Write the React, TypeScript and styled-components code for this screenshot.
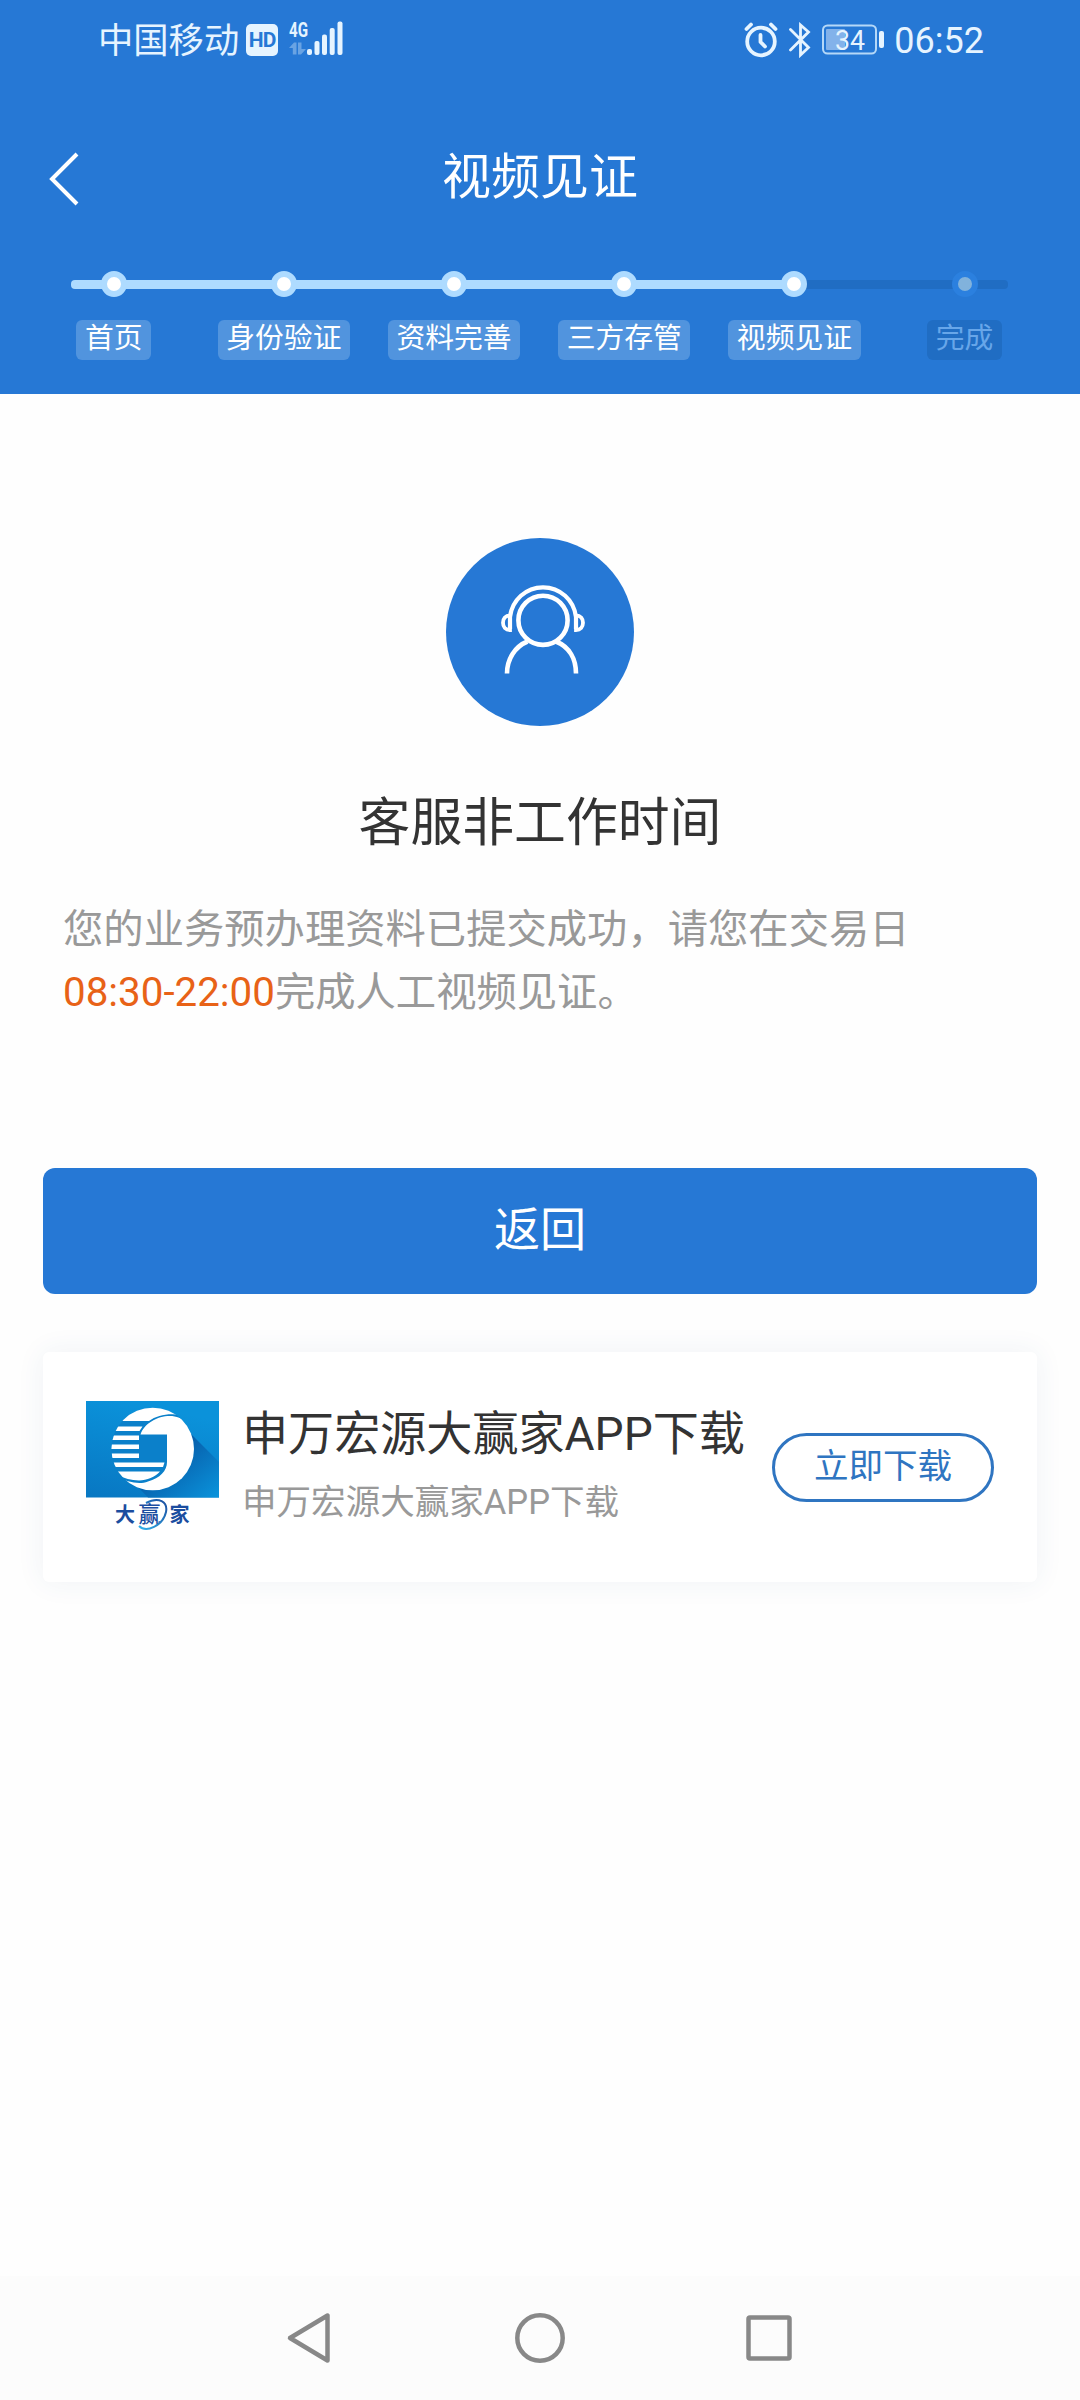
import React from 'react';
import styled, { createGlobalStyle } from 'styled-components';

const blue = '#2678d5';
const statusInk = '#e6f4ff';

const GlobalStyle = createGlobalStyle`
  * { box-sizing: border-box; }
  body {
    margin: 0;
    background: #fefefe;
    font-family: Roboto, "Noto Sans CJK SC", sans-serif;
  }
`;

const Screen = styled.div`
  width: 1080px;
  height: 2400px;
  display: flex;
  flex-direction: column;
  background: #fefefe;
`;

const Header = styled.header`
  height: 394px;
  background: ${blue};
  display: flex;
  flex-direction: column;
`;

const StatusBar = styled.div`
  height: 80px;
  padding: 0 96px 0 98px;
  display: flex;
  align-items: center;
  justify-content: space-between;
  color: ${statusInk};
`;

const StatusGroup = styled.div<{ $gap?: number }>`
  display: flex;
  align-items: center;
  gap: ${p => p.$gap ?? 0}px;
`;

const Carrier = styled.span`
  padding-top: 2px;
  font-size: 35.3px;
  line-height: 50px;
  white-space: nowrap;
  margin-right: 7px;
`;

const HdBadge = styled.span`
  width: 32px;
  height: 32px;
  border-radius: 5px;
  background: ${statusInk};
  color: ${blue};
  font: 700 21px/33px Roboto, sans-serif;
  letter-spacing: -0.8px;
  text-align: center;
  margin-right: 11px;
`;

const Clock = styled.span`
  padding-top: 1px;
  font: 400 36px/44px Roboto, sans-serif;
`;

const TitleBar = styled.div`
  height: 191px;
  display: grid;
  grid-template-columns: 120px 1fr 120px;
  align-items: center;
`;

const BackButton = styled.button`
  padding: 7px 0 0 48px;
  border: 0;
  background: none;
  display: flex;
`;

const PageTitle = styled.h1`
  margin: 0;
  padding-top: 4px;
  font-size: 48.96px;
  font-weight: 400;
  line-height: 70px;
  text-align: center;
  color: #fff;
`;

const Steps = styled.ol`
  list-style: none;
  margin: 0;
  padding: 0 28.6px;
  display: grid;
  grid-template-columns: repeat(6, 170.2px);
`;

type StepProps = { $done: boolean };

const Step = styled.li`
  display: flex;
  flex-direction: column;
  align-items: center;
`;

const Track = styled.div<{ $left: string; $right: string; $edge?: 'start' | 'end' }>`
  width: 100%;
  height: 26px;
  display: grid;
  grid-template-columns: 1fr 26px 1fr;
  align-items: center;

  &::before, &::after {
    content: "";
    height: 9px;
    margin-right: -2px;
    background: ${p => p.$left};
    grid-row: 1;
    grid-column: 1;
  }
  &::before {
    ${p => p.$edge === 'start' && 'margin-left: 42px; border-radius: 4px 0 0 4px;'}
  }
  &::after {
    grid-column: 3;
    margin-left: -2px;
    margin-right: 0;
    background: ${p => p.$right};
    ${p => p.$edge === 'end' && 'margin-right: 42px; border-radius: 0 4px 4px 0;'}
  }
`;

const Dot = styled.span<StepProps>`
  grid-row: 1;
  grid-column: 2;
  z-index: 1;
  width: 26px;
  height: 26px;
  border-radius: 50%;
  border: 6px solid ${p => (p.$done ? '#aedbff' : '#2b80df')};
  background: ${p => (p.$done ? '#fff' : '#81b2dc')};
`;

const StepLabel = styled.span<StepProps>`
  margin-top: 23px;
  height: 40px;
  padding: 0 8.6px;
  border-radius: 6px;
  font-size: 28.8px;
  line-height: 37px;
  white-space: nowrap;
  color: ${p => (p.$done ? '#fff' : '#67a6e9')};
  background: ${p => (p.$done ? '#5194de' : '#206dc3')};
`;

const Main = styled.main`
  flex: 1;
  padding: 143.500px 43px 0;
  display: flex;
  flex-direction: column;
`;

const Avatar = styled.div`
  align-self: center;
  width: 188px;
  height: 188px;
  border-radius: 50%;
  background: ${blue};
`;

const Heading = styled.h2`
  margin: 60.500px 0 0;
  font-size: 51.84px;
  font-weight: 400;
  line-height: 76px;
  text-align: center;
  color: #333;
`;

const Message = styled.p`
  margin: 36px 0 0;
  padding: 0 20px;
  font-size: 40.32px;
  line-height: 63px;
  color: #999;
`;

const Hours = styled.span`
  color: #e86217;
`;

const PrimaryButton = styled.button`
  margin-top: 144px;
  height: 126px;
  padding: 0 0 11px;
  border: 0;
  border-radius: 12px;
  background: ${blue};
  color: #fff;
  font-family: inherit;
  font-size: 46.08px;
`;

const AppCard = styled.section`
  margin-top: 58px;
  height: 230px;
  padding: 0 43px;
  display: flex;
  align-items: center;
  border-radius: 6px;
  background: #fff;
  box-shadow: 0 0 29px rgba(40, 80, 130, 0.07);
`;

const AppLogo = styled.div`
  width: 133px;
  height: 133px;
  margin-right: 23px;
`;

const AppInfo = styled.div`
  flex: 1;
  padding-bottom: 7px;
  white-space: nowrap;
`;

const AppName = styled.div`
  font-size: 46.08px;
  line-height: 68px;
  color: #333;
`;

const AppDesc = styled.div`
  margin-top: 8px;
  font-size: 34.56px;
  line-height: 52px;
  color: #999;
`;

const DownloadButton = styled.button`
  width: 222px;
  height: 69px;
  padding: 0 0 3px;
  border: 3px solid #2f75c1;
  border-radius: 35px;
  background: #fff;
  color: #2f75c1;
  font-family: inherit;
  font-size: 34.56px;
  line-height: 50px;
`;

const NavBar = styled.nav`
  height: 124px;
  background: #fcfcfc;
  display: flex;
  justify-content: center;
  align-items: center;
  gap: 169px;
`;

const SignalIcon = () => (
  <svg width="56" height="54" viewBox="0 -8 56 54" fill={statusInk}>
    <text x="0" y="16" fontSize="20" fontWeight="700" fontFamily="Roboto" textLength="19" lengthAdjust="spacingAndGlyphs">4G</text>
    <g opacity=".35">
      <path d="M0 27L5 21.500H7.500V33.500H3.800V27z" />
      <path d="M9 21.500h3.500v6.500H17L12 33.500H9z" />
    </g>
    <rect x="18" y="28" width="5" height="6" rx="2" />
    <rect x="25.500" y="20" width="5" height="14" rx="2" />
    <rect x="33" y="13.500" width="5" height="20.500" rx="2" />
    <rect x="40.700" y="7" width="5" height="27" rx="2" />
    <rect x="48.500" y="0.500" width="5" height="33.500" rx="2" />
  </svg>
);

const AlarmIcon = () => (
  <svg width="34" height="36" viewBox="0 0 34 36" fill="none" stroke={statusInk} strokeWidth="3.800" strokeLinecap="round">
    <circle cx="17" cy="19.500" r="13.800" />
    <path d="M16.500 13v7l4.500 4.500" strokeLinejoin="round" />
    <path d="M2.500 7l4.500-4.500M31.500 7l-4.500-4.500" />
  </svg>
);

const BluetoothIcon = () => (
  <svg width="24" height="36" viewBox="0 0 24 36" fill="none" stroke={statusInk} strokeWidth="2.800" strokeLinecap="round">
    <path d="M2.500 7.500L20.500 25.500 12.500 33V3l8 7L2.500 28" />
  </svg>
);

const BatteryIcon = () => (
  <svg width="64" height="32" viewBox="0 0 64 32">
    <rect x="1" y="1.500" width="53" height="28" rx="4.500" fill="none" stroke="#b5d8f8" strokeWidth="2" />
    <rect x="4" y="5" width="19" height="21" rx="1" fill="#83b2ea" />
    <text x="13" y="25.500" fontSize="28" fontFamily="Roboto" fill={statusInk} textLength="30" lengthAdjust="spacingAndGlyphs">34</text>
    <rect x="57" y="7" width="5" height="17" rx="2" fill={statusInk} />
  </svg>
);

const AgentIcon = () => (
  <svg width="188" height="188" viewBox="0 0 188 188" fill="none" stroke="#fff" strokeWidth="4.600">
    <circle cx="97" cy="82.300" r="24.600" />
    <path d="M61 135.500C61 121 69 108.500 81.500 103.500M130 135.500C130 121 123.500 109 110 103.500" />
    <path d="M64 91V79C66 62 80 49.300 97 49.300S128 62 130 79V91" strokeWidth="4.200" />
    <path d="M64 77.500V92C59.500 92 57 89 57 84.800S59.500 77.500 64 77.500zM130 77.500V92C134.500 92 137 89 137 84.800S134.500 77.500 130 77.500z" strokeWidth="3.800" />
  </svg>
);

const BrandIcon = () => (
  <svg width="133" height="133" viewBox="0 0 133 133">
    <defs>
      <linearGradient id="sky" x1="0.300" y1="0" x2="0" y2="1">
        <stop offset="0" stopColor="#0b92da" />
        <stop offset="1" stopColor="#0877c2" />
      </linearGradient>
      <linearGradient id="shade" x1="0" y1="0" x2="1" y2="1">
        <stop offset="0.300" stopColor="#0757a4" />
        <stop offset="1" stopColor="#0a94dc" />
      </linearGradient>
      <linearGradient id="swirl" x1="0" y1="1" x2="1" y2="0">
        <stop offset="0" stopColor="#31b2ec" />
        <stop offset="1" stopColor="#1b4d9f" />
      </linearGradient>
      <clipPath id="disc"><circle cx="66.700" cy="48" r="41.300" /></clipPath>
    </defs>
    <rect width="133" height="96.500" fill="url(#sky)" />
    <path d="M100 28L133 61V96.500H62L50 84z" fill="url(#shade)" />
    <circle cx="66.700" cy="48" r="41.300" fill="#0b80ca" />
    <g clipPath="url(#disc)">
      <path d="M25 20V0H110V20C96 11 75 11 63 20z" fill="#fff" />
      <path d="M54.500 33.500C60 17 88 8 101 22L112 35V95H45L30 76C42 81 53 84 62 80.500C74 77 81 70 81 61V33.500z" fill="#fff" />
      <path d="M25 25.500H56.500L53.500 30H25zM25 34.500H53V39H25zM25 43.500H53V48H25zM25 52.500H53V57H25zM25 61.500H78.500L77 66H25z" fill="#fff" />
      <path d="M25 70.500H74C69 76 61 79.500 53 79.500S38 77 32 74H25z" fill="#fff" />
    </g>
    <g fill="#1b4d9f" fontFamily="Noto Sans CJK SC" fontWeight="700" fontSize="20">
      <text x="29" y="120.500">大</text>
      <text x="52.500" y="121" fontSize="22" fontWeight="500">赢</text>
      <text x="83.500" y="120.500">家</text>
    </g>
    <path d="M60 102C73 95 82 101 80 111C77 125 60 132 53 125" fill="none" stroke="url(#swirl)" strokeWidth="2" />
  </svg>
);

const steps = ['首页', '身份验证', '资料完善', '三方存管', '视频见证', '完成'];
const current = 4;
const lit = '#aedbff';
const dim = '#206dc3';

export default function App() {
  return (
    <Screen>
      <GlobalStyle />
      <Header>
        <StatusBar>
          <StatusGroup>
            <Carrier>中国移动</Carrier>
            <HdBadge>HD</HdBadge>
            <SignalIcon />
          </StatusGroup>
          <StatusGroup $gap={10}>
            <AlarmIcon />
            <BluetoothIcon />
            <StatusGroup $gap={8}>
              <BatteryIcon />
              <Clock>06:52</Clock>
            </StatusGroup>
          </StatusGroup>
        </StatusBar>
        <TitleBar>
          <BackButton aria-label="返回">
            <svg width="32" height="54" viewBox="0 0 32 54" fill="none" stroke="#fff" strokeWidth="4">
              <path d="M29 2L4 27L29 52" />
            </svg>
          </BackButton>
          <PageTitle>视频见证</PageTitle>
        </TitleBar>
        <Steps>
          {steps.map((name, i) => (
            <Step key={name}>
              <Track
                $left={i <= current ? lit : dim}
                $right={i < current ? lit : dim}
                $edge={i === 0 ? 'start' : i === steps.length - 1 ? 'end' : undefined}
              >
                <Dot $done={i <= current} />
              </Track>
              <StepLabel $done={i <= current}>{name}</StepLabel>
            </Step>
          ))}
        </Steps>
      </Header>
      <Main>
        <Avatar><AgentIcon /></Avatar>
        <Heading>客服非工作时间</Heading>
        <Message>
          您的业务预办理资料已提交成功，请您在交易日<Hours>08:30-22:00</Hours>完成人工视频见证。
        </Message>
        <PrimaryButton>返回</PrimaryButton>
        <AppCard>
          <AppLogo><BrandIcon /></AppLogo>
          <AppInfo>
            <AppName>申万宏源大赢家APP下载</AppName>
            <AppDesc>申万宏源大赢家APP下载</AppDesc>
          </AppInfo>
          <DownloadButton>立即下载</DownloadButton>
        </AppCard>
      </Main>
      <NavBar>
        <svg width="60" height="60" viewBox="0 0 60 60" fill="none" stroke="#888" strokeWidth="4.500" strokeLinejoin="round">
          <path d="M46.500 7.500V52.500L9 30z" />
        </svg>
        <svg width="60" height="60" viewBox="0 0 60 60" fill="none" stroke="#888" strokeWidth="4.500">
          <circle cx="30" cy="30" r="22.700" />
        </svg>
        <svg width="60" height="60" viewBox="0 0 60 60" fill="none" stroke="#888" strokeWidth="4.500">
          <rect x="9.500" y="9.500" width="41" height="41" rx="1.500" />
        </svg>
      </NavBar>
    </Screen>
  );
}
